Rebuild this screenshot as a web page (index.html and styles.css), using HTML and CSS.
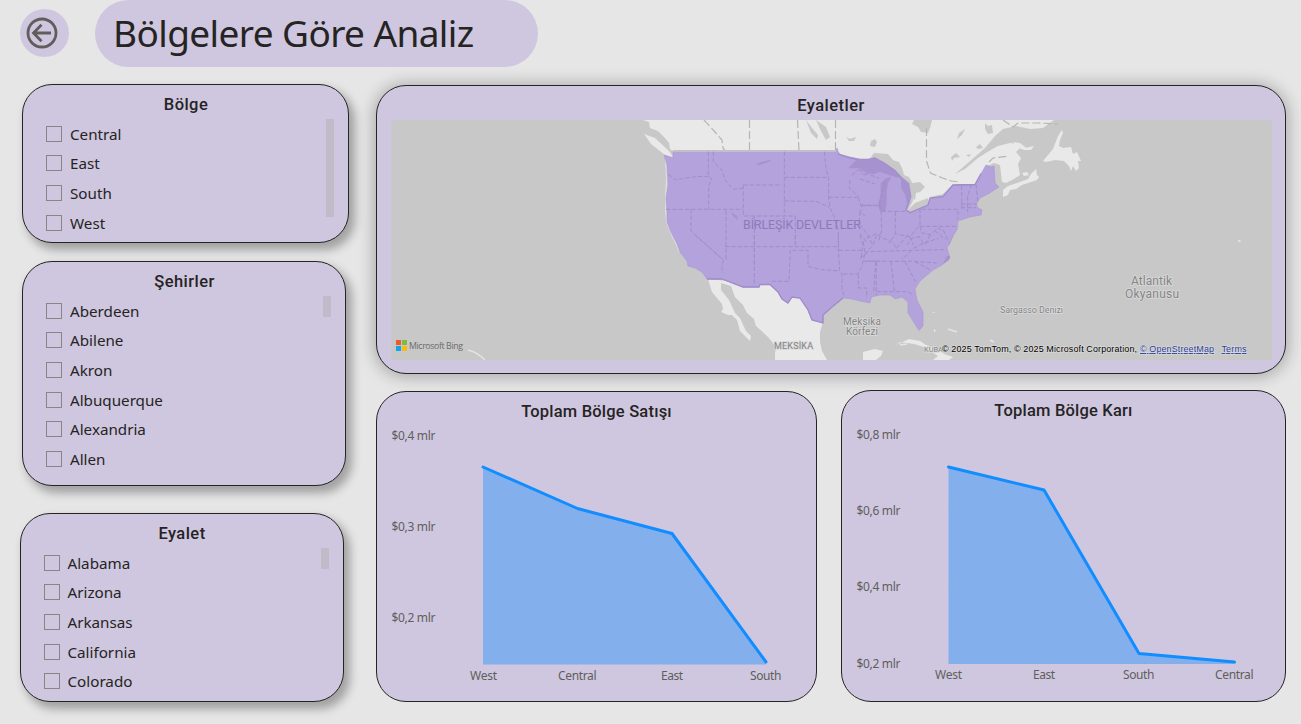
FILE: index.html
```html
<!DOCTYPE html>
<html lang="tr">
<head>
<meta charset="utf-8">
<title>Bölgelere Göre Analiz</title>
<link rel="stylesheet" href="styles.css">
</head>
<body>
<header class="header">
  <a class="back" aria-label="Geri"><svg width="32" height="32" viewBox="0 0 32 32"><circle cx="16" cy="16" r="14"/><path d="M25 16H8M15.500 7.800 7.500 16l8 8.200"/></svg></a>
  <h1 class="page-title"><span>Bölgelere Göre Analiz</span></h1>
</header>
<main class="board">
  <aside class="filters">
    <section class="card slicer region">
      <h2>Bölge</h2>
      <ul><li>Central</li><li>East</li><li>South</li><li>West</li></ul>
      <i class="scroll"></i>
    </section>
    <section class="card slicer city">
      <h2>Şehirler</h2>
      <ul><li>Aberdeen</li><li>Abilene</li><li>Akron</li><li>Albuquerque</li><li>Alexandria</li><li>Allen</li></ul>
      <i class="scroll"></i>
    </section>
    <section class="card slicer state">
      <h2>Eyalet</h2>
      <ul><li>Alabama</li><li>Arizona</li><li>Arkansas</li><li>California</li><li>Colorado</li></ul>
      <i class="scroll"></i>
    </section>
  </aside>
  <div class="visuals">
    <section class="card map-card">
      <h2>Eyaletler</h2>
      <svg class="map" width="881" height="240" viewBox="391 120 881 240">
        <rect class="water" x="391" y="120" width="881" height="240"/>
        <!-- Canada -->
        <path class="land" d="M643 120l6 2 1 6 8 3 7 7 4 5 1 6 4 3H836l3 0 2 3 5 2 8 1 6 3 14-2 4-3h6l5 3 10 3 3 6 2 7 7 5 3 9-1 12-5 9 3 2 18-7 2-6 13-2 10-11h22l5-11 6-9 7-3 6 2 2 17 4 1 8-4 6-4-2-11 3-6-5-6 4-4-1-4-9-1-12 3-9 5-11 7-13 11-10 5 14-12 16-14 10-12 8-7 13-3 14 3 13-1 11-8 8-7 7-7z"/>
        <path class="land" d="M644 134l11 4 14 13 4 6-8-2-14-11zM1062 130l-4 6-5 13-10 12 3 1 9-2 9 1 5 5 2 5 2-5 3 5 3-3-1-7 3 0-4-9-4 2-2-7-8 1-4-2 1-6 3-7zM1003 190l5-4 9-3 11-4 3-5 5-5 1 6 2 2-2 3-15 5-6 4-6 1-2 5-5 2zM1013 142l7 1 9 7-5 0-7-3zM1020 149l14-3-3 4zM1022 173l5-1 2 3-5 1z"/>
        <!-- lakes and inlets -->
        <path class="water" d="M914 120h18l-2 8-2 5-7-1-3-5-6-3zM869 160l5-7 14 1 5 6 5 6 1 12-9-9-11-8-7-1zM901 174l8 3 3 6 8-1 5 5-5 5-4 1-1 7-5-4-1-9-6-4zM907 211l8-8 13-5 1 7-10 4-8 4zM930 197l13-3 10-10 2 1-10 12-13 2zM955 184h20l2 2-22 1zM806 120l6 8 6 7-1 4-6-6zM816 120l10 7 4 10-4 3-5-9zM846 137l4 2 6-2-2 4-5 0zM871 141l4-2 2 3-2 5-5-1zM957 139l2-6 6-4-3 6zM985 123l3 3 4-1 1 8-5 1-3-5zM951 157l5-4 4 4-6 1-2 3zM976 147l4-3 3 4-5 1zM966 155l5-1-2 3z"/>
        <path class="canada-borders" d="M704 120l11 12 7 8 1 8 5 6M749.500 120v30M797.500 120l1.500 31M835.500 120v30M926.500 128v33l4 12 12 5 9 3 8 1M1003 120l10 7 5-4h20l20 1M989 162l4-4 16-2"/>
        <!-- Mexico, Yucatan, Cuba and islands -->
        <path class="land" d="M708 279L712 292L722 304L723 309L721 312L728 315L732 315L737 320L740 331L750 341L751 336L746 331L740 318L735 313L729 300L721 290V283L731 286L735 297L743 305L747 313L754 319L756 326L768 337L777 348L775 352V360H827L822 351L820 342V332L823 322L823 290L778 280L737 282zM863 352l12-3 8 2-2 5-5 4h-13zM896 345l13-6 11 2 6 4 10 3 8 6 9 3-4 3h-16l5-4-14-9-10-3-14-2zM934 329l2 2-2 1zM932 312l4 1-3 0zM1238 240l4 1-4 1z"/>
        <path class="island-line" d="M468 350q9 2 17 10M948 329l9 3M900 345l7-1M990 340l4 2"/>
        <path class="us-glow" d="M666 160L667 178L666 198L666 210L667 222L670 230L676 243L680 252"/>
        <path class="us" d="M664 155L673 158L673 151L836 151L837 148L839 154L850 157L860 159L868 159L875 157.500L885 163L895 170L901.500 177L909 183L911 197L909 204L906 210L910 213L928 205.500L930 198.500L943 197L953 185.500L975 185L981 174L986 165L991 167L994 166L995 183L999 187L988 194L980 198L977 203L977 207L982 210L981 215L970 217L958 221L957 230L950 240L949 245L953 236L947 248L950 258L942 265L933 270L920 281L915 289L917 300L923 312L923 326L919 330.500L913 321L908 313L908 302L902 297L895 299L890 295L880 295L871.500 297L870 303L860 301L852 299L843 298L832 307L823 315L823 323L812 320L808 310L800 298L792 297L788 303L782 299L778 292L770 284.500L760 284.500L759 287L743 287L722 279L707 279L702 272L695 268L688 266L687 261L680 252L677 244L670 230L667 222L667 212L666 198L668 185L667 165z"/>
        <path class="border-shade" d="M838 154L850 158L860 160L868 160L875 158.500L885 164L895 171L901 178L908 184L910 197L908 204L906 210L910 212.500L928 205L930 198L943 196.500L953 185L975 184.500L981 173.500M707 279L722 279L743 287L759 287L760 284.500L770 284.500L778 292L782 299L788 303L792 297L800 298L808 310L812 320L823 323L823 315L832 307L843 298"/>
        <path class="border-line" d="M673 151h163"/>
        <g transform="translate(860 115) scale(.3333)">
          <path class="lake" d="M-10 132L20 136L45 130L80 152L110 170L118 190L100 184L80 178L60 170L40 178L20 172L-5 160L-35 160L-20 145zM62 205L78 190L95 186L85 202L80 225L80 265L76 289L60 288L55 265L62 240zM122 186L146 206L154 245L142 270L136 240L124 220z"/>
        </g>
        <path class="lake" d="M756 164l5-2 9-2 1 1-11 4zM731 212l6 4 1 4-5-4zM947 256l3 0-1 4-6 4z"/>
        <g class="states">
          <g transform="translate(640 115) scale(.3333)">
            <path d="M85 178l22 16 60-9 38-1M205 110v72l10 10-9 20v70M78 283h231M220 110v30l25 25 10 30 25 28 29-4M310 210h115M310 210v93h156M433 110v192M433 187h130M433 258l95 1 40 18M553 110l5 50 8 30v57l4 30 15 35 10 35 1 50M565 247h90M655 247l10 30-5 15 15 10M153 283v65l95 85M258 287v150M343 303v150M466 303v85M630 195l-2 25 28 25M635 180l22-17M657 165l60 25M666 272h55M660 290l-2 35 25 35 15 30"/>
          </g>
          <g transform="translate(640 235) scale(.3333)">
            <path d="M165 0l85 75-5 25 5 15M255 35h340M466 0v35M343 0v153M395 139h52l4-93h53v48l40 10 55 4M595 0v40l4 65 7 15v42l7 20M596 46h75M670 20l5 35-10 40-12 22h-48M655 117v42h25v30M710 0l-10 30-25 25M680 78h40M709 80v100"/>
          </g>
          <g transform="translate(860 115) scale(.3333)">
            <path d="M0 270l58 1 5 15 2 60-8 30M65 289h72M106 290v68l-20 27M180 280v50l-30 35-40-8M180 334h115M185 283h110l-2 30M305 212v75M335 208l-12 35v48M303 267h45M303 278h45M348 208l5 50M0 355l20 28M180 334l5 20 25 5 25-20 15 10M250 345l15 35M150 365l10 25M210 360l-15 30M225 347l30 27M0 192l45 15M20 180l-20-5M75 200l-15 60v25"/>
          </g>
          <g transform="translate(860 235) scale(.3333)">
            <path d="M0 70l25-20 130-4 105-2M10 79h150l70 5M155 45l-30 30M47 80l-6 95M93 80l10 88M50 170h95l15 10M135 80l32 60M165 80l50 27M20 10l30-15 20 15 25 10 15 20M110 40l20-25 15-15M140 30l15-20 25-5M160 40l30-15 45-15M0 0l8 30-5 45M190 25l-12-20"/>
          </g>
        </g>
        <g class="place">
          <text class="country" x="743" y="229" textLength="118">BİRLEŞİK DEVLETLER</text>
          <text x="774" y="349" font-size="9" textLength="39">MEKSİKA</text>
          <text x="843" y="325" textLength="38">Meksika</text><text x="846" y="335" textLength="32">Körfezi</text>
          <text class="ocean" x="1131" y="285" textLength="41">Atlantik</text><text class="ocean" x="1125" y="298" textLength="54">Okyanusu</text>
          <text class="sea" x="1000" y="313" textLength="63">Sargasso Denizi</text>
          <text class="cuba" x="924" y="352" textLength="19">KÜBA</text>
        </g>
        <path fill="#f05a28" d="M396 340h5v5h-5z"/><path fill="#80bb3c" d="M402 340h5v5h-5z"/><path fill="#13a4e8" d="M396 346h5v5h-5z"/><path fill="#fbb912" d="M402 346h5v5h-5z"/>
        <text class="bing" x="409" y="349" textLength="54">Microsoft Bing</text>
        <g class="credit"><text x="942" y="352" textLength="195">© 2025 TomTom, © 2025 Microsoft Corporation,</text><text class="link" x="1140" y="352" textLength="74">© OpenStreetMap</text><text class="link" x="1221.500" y="352" textLength="25">Terms</text></g>
      </svg>
    </section>
    <div class="charts">
      <section class="card chart sales">
        <h2>Toplam Bölge Satışı</h2>
        <svg width="420" height="265" viewBox="390 426 420 265">
          <path class="grid" d="M445.500 436.500h360M445.500 527.500h360M445.500 618.500h360"/>
          <path class="area" d="M483 467l94.500 41.500L672 533.500l94 128.500v2.500H483z"/>
          <path class="line" d="M483 467l94.500 41.500L672 533.500l94 128.500"/>
          <g class="axis"><text x="391.500" y="440" textLength="44">$0,4 mlr</text><text x="391.500" y="531" textLength="44">$0,3 mlr</text><text x="391.500" y="622" textLength="44">$0,2 mlr</text>
          <text x="470" y="680" textLength="27">West</text><text x="558" y="680" textLength="38.500">Central</text><text x="661" y="680" textLength="22">East</text><text x="750" y="680" textLength="31.500">South</text></g>
        </svg>
      </section>
      <section class="card chart profit">
        <h2>Toplam Bölge Karı</h2>
        <svg width="424" height="265" viewBox="855 425 424 265">
          <path class="grid" d="M910.500 435.500h360M910.500 511.500h360M910.500 587.500h360M910.500 663.500h360"/>
          <path class="area" d="M948.500 467l95.500 23 95 163.500 95.500 8.500v2H948.500z"/>
          <path class="line" d="M948.500 467l95.500 23 95 163.500 95.500 8.500"/>
          <g class="axis"><text x="856.500" y="439" textLength="44">$0,8 mlr</text><text x="856.500" y="515" textLength="44">$0,6 mlr</text><text x="856.500" y="591" textLength="44">$0,4 mlr</text><text x="856.500" y="668" textLength="44">$0,2 mlr</text>
          <text x="935" y="679" textLength="27">West</text><text x="1033" y="679" textLength="22">East</text><text x="1123" y="679" textLength="31.500">South</text><text x="1215" y="679" textLength="38.500">Central</text></g>
        </svg>
      </section>
    </div>
  </div>
</main>
</body>
</html>
```
FILE: styles.css
```css
*, *::before { box-sizing: border-box; }
body { margin: 0; width: 1301px; height: 724px; overflow: hidden; background: #e6e6e6; color: #252423; font-family: "Noto Sans", "Open Sans", sans-serif; }
.header { display: flex; align-items: flex-start; height: 67px; padding-left: 20px; }
.back { display: flex; align-items: center; width: 49px; height: 48px; margin: 9px 26px 0 0; padding-left: 6px; border-radius: 50%; background: #cfc7df; }
.back svg { fill: none; stroke: #605e5c; stroke-width: 2.800; }
.page-title { display: flex; align-items: center; width: 443px; height: 67px; margin: 0; padding: 0 0 3px 18px; border-radius: 34px; background: #cfc7df; font-size: 37px; font-weight: 400; white-space: nowrap; letter-spacing: -.6px; }
.board { display: flex; align-items: flex-start; padding: 17px 0 0 20px; }
.filters { width: 356px; flex: none; }
.card { position: relative; border: 1px solid #252423; border-radius: 30px; background: #cfc7df; }
.card h2 { margin: 0; text-align: center; font: 500 16.500px/20px Roboto, sans-serif; letter-spacing: .45px; }
.slicer { margin-left: 2px; box-shadow: 5px 6px 10px 1px rgba(0,0,0,.3); padding: 10px 0 0 23px; }
.slicer h2 { margin-left: -22px; }
.slicer ul { margin: 4px 0 0; padding: 0; list-style: none; }
.slicer li { display: flex; align-items: center; gap: 8px; height: 29.600px; font-size: 15.200px; white-space: nowrap; }
.slicer li::before { content: ""; width: 16px; height: 16px; border: 1px solid #8a8583; }
.region { width: 327px; height: 159px; }
.city { width: 324px; height: 225px; margin-top: 18px; }
.state { width: 324px; height: 189px; margin: 27px 0 0 -.5px; }
.scroll { position: absolute; width: 8px; background: #c1bac8; }
.region .scroll { right: 14px; top: 34px; height: 98px; }
.city .scroll { right: 14px; top: 34px; height: 21px; }
.state .scroll { right: 14px; top: 34px; height: 21px; }
.map-card { width: 910px; height: 289px; margin-top: 1px; padding: 10px 0 0 14px; box-shadow: 0 1px 16px 2px rgba(0,0,0,.27); }
.map-card h2 { margin-left: -14px; }
.map { display: block; margin-top: 4px; }
.charts { display: flex; align-items: flex-start; gap: 24px; margin-top: 16px; }
.card.chart h2 { letter-spacing: .2px; }
.chart svg { display: block; margin: 4px 0 0 13px; }
.sales { width: 441px; height: 311px; margin-top: 1px; padding-top: 10px; }
.profit { width: 445px; height: 312px; padding-top: 10px; }
.water { fill: #c8c8c8; }
.land { fill: #e9e9e9; }
.canada-borders { fill: none; stroke: #b5b5b1; stroke-width: 1.200; stroke-dasharray: 8 3; }
.island-line { fill: none; stroke: #e4e4e4; stroke-width: 1.500; }
.us-glow { fill: none; stroke: #ddd; stroke-width: 2; }
.us { fill: #b3a2dc; stroke: #a997d2; stroke-width: .600; stroke-linejoin: round; }
.border-shade { fill: none; stroke: #a08bcb; stroke-width: 1.300; }
.border-line { stroke: #c4bec8; stroke-width: 2; }
.lake { fill: #a592cf; }
.states { fill: none; stroke: #a08dc9; stroke-width: 3; stroke-dasharray: 13 6; }
.place { font-family: Roboto, sans-serif; font-size: 10px; fill: #858585; stroke: #d9d9d9; stroke-width: 1.500; paint-order: stroke; }
.country { font-size: 12.500px; fill: #8c7bb9; stroke: none; }
.ocean { font-size: 12px; }
.sea { font-size: 9px; }
.cuba { font-size: 7.500px; }
.bing { font-family: "Open Sans", sans-serif; font-size: 8.800px; fill: #6b6b6b; }
.credit { font-family: "Liberation Sans", Arial, sans-serif; font-size: 9px; fill: #000; stroke: #d7d7d7; stroke-width: 1.500; paint-order: stroke; }
.link { fill: #2a3f9d; text-decoration: underline; }
.axis { font-size: 12px; fill: #605e5c; }
.grid { fill: none; stroke: #c8c6c4; stroke-width: 1; stroke-dasharray: 1 5; }
.area { fill: #118dff; opacity: .4; }
.line { fill: none; stroke: #118dff; stroke-width: 3; stroke-linejoin: round; stroke-linecap: round; }
```
